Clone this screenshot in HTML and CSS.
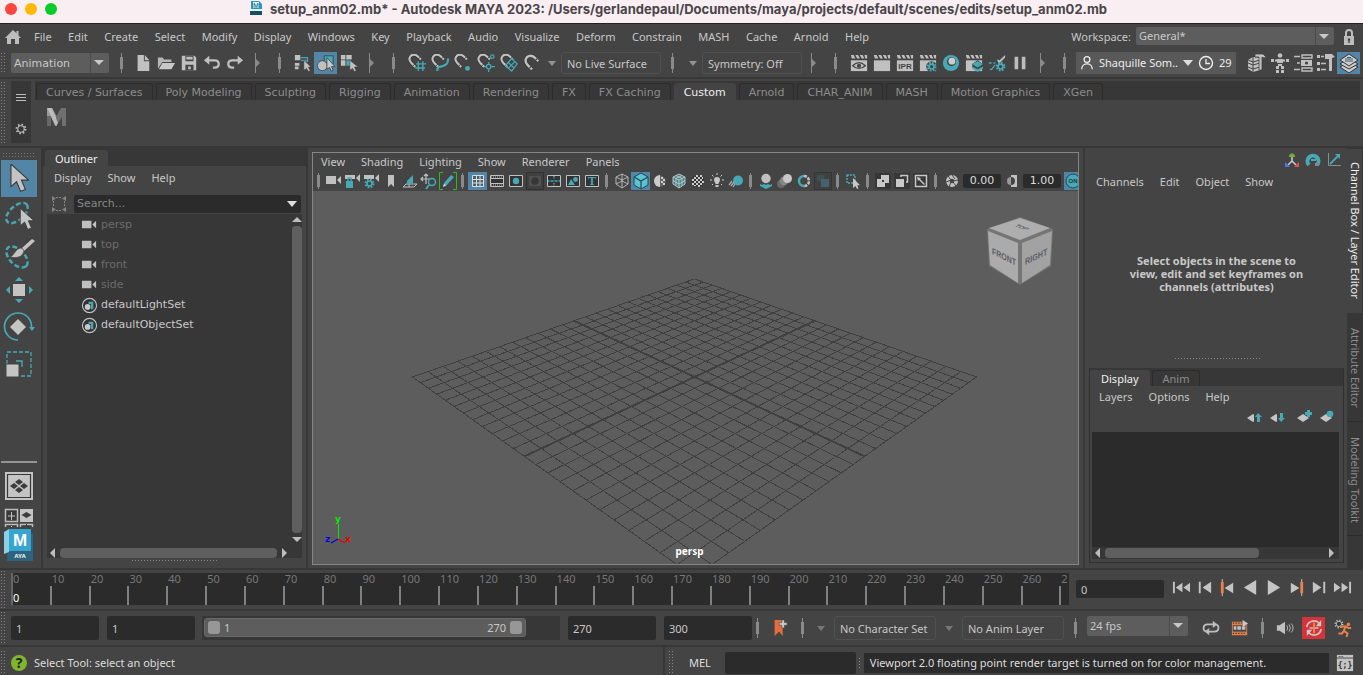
FILE: index.html
```html
<!DOCTYPE html>
<html lang="en">
<head>
<meta charset="utf-8">
<title>setup_anm02.mb* - Autodesk MAYA 2023</title>
<link rel="stylesheet" href="styles.css">
</head>
<body>
<svg class="defs" aria-hidden="true">
<defs>
<symbol id="arrow-cursor" viewBox="0 0 12 18"><path d="M1 0v14l3.500-3 2.500 6 3-1.200-2.500-5.800h4.500z" fill="#c4c4c4" stroke="#3a3a3a" stroke-width=".7"/></symbol>
<symbol id="home" viewBox="0 0 18 18"><path d="M9 2 1 10h2v6h4v-5h4v5h4v-6h2l-2.500-2.500V3h-2v2.300z" fill="#bdbdbd"/></symbol>
<symbol id="lock" viewBox="0 0 14 18"><path d="M4 8V5a3 3 0 0 1 6 0v3" fill="none" stroke="#bdbdbd" stroke-width="2"/><path d="M2 8h10v9H2z" fill="#bdbdbd"/><path d="M6.300 11h1.400v4H6.300zM5.800 10.500h2.400v2H5.800z" fill="#444"/></symbol>
<symbol id="new" viewBox="0 0 20 20"><path d="M4 1h7v7h6v11H4z" fill="#c0c0c0"/><path d="m12 1 5 6h-5z" fill="#c0c0c0"/></symbol>
<symbol id="open" viewBox="0 0 20 20"><path d="M1 16V4h5l2 2h8v3H6z" fill="#b6b6b6"/><path d="M2 17 6 10h14l-4 7z" fill="#c8c8c8"/></symbol>
<symbol id="save" viewBox="0 0 20 20"><path d="M2 2h14l2 2v14H2z" fill="#c0c0c0"/><path d="M6 2h9v6H6zM6 12h9v6H6z" fill="#444"/><path d="M7 3h7v3H7zM9 14h3v3H9z" fill="#c0c0c0"/></symbol>
<symbol id="undo" viewBox="0 0 20 20"><path d="M4 7h9c6 0 6 8 0 8h-2" fill="none" stroke="#c0c0c0" stroke-width="2.500"/><path d="M7 2 1 7l6 5z" fill="#c0c0c0"/></symbol>
<symbol id="redo" viewBox="0 0 20 20"><path d="M16 7H7c-6 0-6 8 0 8h2" fill="none" stroke="#c0c0c0" stroke-width="2.500"/><path d="m13 2 6 5-6 5z" fill="#c0c0c0"/></symbol>
<symbol id="sel-hier" viewBox="0 0 20 20"><path d="M1 1h6v6H1zM1 10h5v3H1zM1 14h4v3H1z" fill="#c0c0c0"/><path d="M7 4h8v5M8 7h5v4" fill="none" stroke="#47a6b2" stroke-width="1.500"/><path d="M11 7v11l3-2 2 3.500 2-1-2-4h3z" fill="#c0c0c0" stroke="#333" stroke-width=".5"/></symbol>
<symbol id="sel-obj" viewBox="0 0 20 20"><path d="M8 2h10v10H8z" fill="#47a9b5" stroke="#333" stroke-width=".8"/><circle cx="6" cy="13" r="5.500" fill="#c0c0c0" stroke="#333" stroke-width=".8"/><path d="M11 4v13l3-2 2 4 2-1-2-4h4z" fill="#c8c8c8" stroke="#333" stroke-width=".8"/></symbol>
<symbol id="sel-comp" viewBox="0 0 20 20"><path d="M1 1h5v5H1zM7 1h6v5H7zM1 7h5v6H1z" fill="#c0c0c0"/><path d="M7 7h5v6H7z" fill="#47a9b5"/><path d="M11 7v11l3-2 2 3.500 2-1-2-4h4z" fill="#c0c0c0" stroke="#333" stroke-width=".5"/></symbol>
<symbol id="magnet" viewBox="0 0 20 20"><path d="M10 17 5 12C-1 6 7-2 13 4l4 4" fill="none" stroke="#333" stroke-width="4"/><path d="M10 17 5 12C-1 6 7-2 13 4l4 4" fill="none" stroke="#c0c0c0" stroke-width="2.700"/><path d="m7 16 3-3M13 8l3-3" stroke="#444" stroke-width="1.200"/></symbol>
<symbol id="snap-grid" viewBox="0 0 20 20"><use href="#magnet" x="-1" y="-1" width="18" height="18"/><path d="M9 11h11M8 15.500h11M11.500 8v11M16.500 8v11" stroke="#47a9b5" stroke-width="1.500"/></symbol>
<symbol id="snap-curve" viewBox="0 0 20 20"><use href="#magnet" x="-1" y="-1" width="18" height="18"/><path d="M7 19c0-6 3-4 7-6 4-1 5-3 5-8" fill="none" stroke="#47a9b5" stroke-width="2.500"/></symbol>
<symbol id="snap-point" viewBox="0 0 20 20"><use href="#magnet" x="-1" y="-1" width="18" height="18"/><circle cx="15" cy="16" r="2.700" fill="#47a9b5"/></symbol>
<symbol id="snap-center" viewBox="0 0 20 20"><use href="#magnet" x="-1" y="-1" width="18" height="18"/><g fill="none" stroke="#47a9b5" stroke-width="1.400"><circle cx="13" cy="14" r="2.500"/><circle cx="17" cy="3" r="1.900"/><path d="M13 9v2M13 17v3M8 14h2M16 14h4"/></g></symbol>
<symbol id="snap-plane" viewBox="0 0 20 20"><use href="#magnet" x="-1" y="-1" width="18" height="18"/><path d="m13 5 6 6-6 8-7-6zM9 9l7 7M16 9l-7 7" fill="none" stroke="#47a9b5" stroke-width="1.400"/></symbol>
<symbol id="clap" viewBox="0 0 20 20"><path d="M1 7h18v12H1z" fill="#c0c0c0"/><path d="M1 1h3l2 4H2zM6 1h3l2 4H8zM11 1h3l2 4h-3zM16 1h3v4h-2z" fill="#c0c0c0"/></symbol>
<symbol id="clap-eye" viewBox="0 0 20 20"><use href="#clap" width="20" height="20"/><path d="M3 13q7-7 14 0-7 6-14 0z" fill="#c0c0c0" stroke="#444" stroke-width="1.400"/><circle cx="10" cy="13" r="2.300" fill="#444"/></symbol>
<symbol id="clap-ipr" viewBox="0 0 20 20"><use href="#clap" width="20" height="20"/><text x="10" y="17" text-anchor="middle" font-family="Liberation Sans" font-weight="bold" font-size="9" fill="#444">IPR</text></symbol>
<symbol id="gear" viewBox="0 0 20 20"><circle cx="10" cy="10" r="7" fill="none" stroke="#47a9b5" stroke-width="4" stroke-dasharray="3 2.500"/><circle cx="10" cy="10" r="4.500" fill="#444" stroke="#47a9b5" stroke-width="3"/></symbol>
<symbol id="gear-grey" viewBox="0 0 16 16"><circle cx="8" cy="8" r="6" fill="none" stroke="#bdbdbd" stroke-width="2.500" stroke-dasharray="2 2.700"/><circle cx="8" cy="8" r="4.300" fill="#373737" stroke="#bdbdbd" stroke-width="1.500"/></symbol>
<symbol id="clap-gear" viewBox="0 0 20 20"><use href="#clap" width="20" height="20"/><circle cx="14" cy="14" r="6" fill="#444"/><use href="#gear" x="8" y="8" width="12" height="12"/></symbol>
<symbol id="render-ball" viewBox="0 0 20 20"><circle cx="10" cy="10" r="9" fill="#47a9b5"/><circle cx="10.500" cy="8.500" r="5" fill="#444"/><circle cx="11" cy="8" r="3.800" fill="#ccc"/></symbol>
<symbol id="clap-layers" viewBox="0 0 20 20"><use href="#clap" width="20" height="20"/><path d="m14 7 6 4v4l-6 5-6-5v-4z" fill="#444"/><path d="m14 8 6 3-6 4-6-4z" fill="#47a9b5"/><path d="m8 14 6 3 6-3v2l-6 4-6-4z" fill="#47a9b5"/></symbol>
<symbol id="hyper" viewBox="0 0 20 20"><path d="m19 1-6 6-3-1 2 5 7-7z" fill="#c0c0c0"/><path d="M1 10h3M6 10h2M2 17h2l4-5" stroke="#47a9b5" stroke-width="1.500" fill="none"/><use href="#gear" x="8" y="8" width="12" height="12"/></symbol>
<symbol id="pause" viewBox="0 0 20 20"><path d="M4 3h4v14H4zM12 3h4v14h-4z" fill="#bdbdbd"/></symbol>
<symbol id="model" viewBox="0 0 20 20"><path d="m1 7 5-3 7 1v12l-7 2-5-3z" fill="#c0c0c0"/><path d="M6 4v15M1 10l5 2 7-2M1 14l5 2 7-2M1 7l5 2 7-2" stroke="#444" fill="none"/><path d="M8 1h8l3 3-2 1-2-1v13h-3V4H8z" fill="#c0c0c0" stroke="#444" stroke-width=".8"/></symbol>
<symbol id="human" viewBox="0 0 20 20"><circle cx="10" cy="2.500" r="2.300" fill="#c0c0c0"/><path d="M1 6h3v3H1zM16 6h3v3h-3zM5 6.500h2v2H5zM13 6.500h2v2h-2zM7 6h6v4H7zM8 11h4v2H8zM6 13h3v3H6zM11 13h3v3h-3zM6 17h3v3H6zM11 17h3v3h-3z" fill="#c0c0c0"/></symbol>
<symbol id="attrs" viewBox="0 0 20 20"><path d="M9 2h10v3H9zM9 15h10v3H9z" fill="#444" stroke="#c0c0c0" stroke-width="1.400"/><path d="M1 3.500h6M1 16.500h6M4 10h3" stroke="#c0c0c0" stroke-width="1.400"/><path d="M8 7h11v6H8z" fill="#c0c0c0"/><circle cx="13.500" cy="10" r="1.600" fill="#444"/></symbol>
<symbol id="toolset" viewBox="0 0 20 20"><path d="M1 2h3v3H1zM1 9h3v3H1zM1 15h3v3H1z" fill="#c0c0c0"/><path d="M5 3.500h3M5 10.500h5M5 16.500h5" stroke="#c0c0c0" stroke-width="1.500"/><path d="M9 1h7l3 3-3 1v13h-3V6H9z" fill="#c0c0c0"/></symbol>
<symbol id="layers" viewBox="0 0 20 20"><path d="m10 9 9 5-9 6-9-6z" fill="#ccc" stroke="#333"/><path d="m10 5 9 6-9 5-9-5z" fill="#ccc" stroke="#333"/><path d="m10 1 9 6-9 6-9-6z" fill="#ccc" stroke="#333"/><path d="M6 6h8M6 8h8M8 4.500h4" stroke="#3d5f75"/></symbol>
<symbol id="user" viewBox="0 0 16 18"><circle cx="8" cy="5" r="3.300" fill="none" stroke="#eee" stroke-width="1.500"/><path d="M2 16c0-8 12-8 12 0" fill="none" stroke="#eee" stroke-width="1.500"/></symbol>
<symbol id="clock" viewBox="0 0 16 16"><circle cx="8" cy="8" r="6.500" fill="none" stroke="#eee" stroke-width="1.400"/><path d="M8 4v4.500h4" fill="none" stroke="#eee" stroke-width="1.300"/></symbol>
<symbol id="lasso" viewBox="0 0 32 34"><ellipse cx="14" cy="14" rx="13" ry="7" transform="rotate(-42 14 14)" fill="none" stroke="#47a6b2" stroke-width="2.500" stroke-dasharray="5 2.500"/><use href="#arrow-cursor" x="16" y="9" width="15" height="23"/></symbol>
<symbol id="paintsel" viewBox="0 0 32 34"><ellipse cx="14" cy="21" rx="13" ry="7.500" transform="rotate(45 14 21)" fill="none" stroke="#47a6b2" stroke-width="2.500" stroke-dasharray="5 2.500"/><path d="m29 3-10 9 2 3 11-10z" fill="#c4c4c4"/><path d="M21 14c-1 8-8 8-14 7 5-2 5-8 11-9z" fill="#c4c4c4" stroke="#444" stroke-width=".6"/></symbol>
<symbol id="move" viewBox="0 0 32 32"><path d="M10 10h12v12H10z" fill="#c4c4c4"/><path d="m16 3 4 4h-8zM16 29l4-4h-8zM3 16l4-4v8zM30 16l-4-4v8z" fill="#47a9b5"/></symbol>
<symbol id="rotate" viewBox="0 0 32 32"><path d="m15 8 8 8-8 8-8-8z" fill="#c4c4c4"/><path d="M15 29A13.500 13.500 0 1 1 28.500 16" fill="none" stroke="#47a9b5" stroke-width="1.700"/><path d="M26 16h6l-3 4z" fill="#47a9b5"/></symbol>
<symbol id="scale" viewBox="0 0 32 32"><path d="M4 4h24v24H4z" fill="none" stroke="#47a9b5" stroke-width="1.300" stroke-dasharray="4 2"/><path d="M3 16h13v13H3z" fill="#c4c4c4" stroke="#444"/><path d="M13 13h6v6" fill="none" stroke="#47a9b5" stroke-width="1.300"/></symbol>
<symbol id="fourview" viewBox="0 0 30 30"><path d="M1 1h28v28H1z" fill="#c4c4c4"/><path d="M3.500 3.500h23v23h-23z" fill="none" stroke="#383838" stroke-width="1.200"/><path d="m15 8 4 3-4 3-4-3zM15 16l4 3-4 3-4-3zM10 12l4 3-4 3-4-3zM20 12l4 3-4 3-4-3z" fill="#3c3c3c"/></symbol>
<symbol id="fourpane" viewBox="0 0 30 19"><path d="M1.500 1.500h12v12h-12zM1.500 16.500h12v6h-12zM16.500 16.500h12v6h-12z" fill="#3a3a3a" stroke="#bdbdbd" stroke-width="1.500"/><path d="M16 1h13v13H16z" fill="#c4c4c4"/><path d="m22.500 4 5 3-5 3-5-3zM22 16h1v3h-1z" fill="#3c3c3c"/><path d="M7.500 4v8M4 8h7M7.500 18v1" stroke="#c4c4c4"/></symbol>
<symbol id="cam" viewBox="0 0 18 18"><path d="M1 4h10v8H1zM12 8l4-4v8z" fill="#c0c0c0"/></symbol>
<symbol id="camlock" viewBox="0 0 18 18"><path d="M1 3h10v4H1zM12 6l4-4v8z" fill="#c0c0c0"/><path d="M2 9h7v7H2z" fill="#47a9b5"/><path d="M4 9V6h3v3" fill="none" stroke="#47a9b5" stroke-width="1.300"/></symbol>
<symbol id="camgear" viewBox="0 0 18 18"><path d="M1 3h10v4H1zM12 6l4-4v8z" fill="#c0c0c0"/><use href="#gear" x="1" y="6" width="11" height="11"/></symbol>
<symbol id="mark" viewBox="0 0 18 18"><path d="M6 3h6v12l-3-3-3 3z" fill="#c0c0c0"/></symbol>
<symbol id="plane" viewBox="0 0 18 18"><path d="m2 15 3-3h11l-3 3zM8 12v3" fill="none" stroke="#c0c0c0"/><path d="M6 13V9l6-6v8z" fill="#47a9b5"/></symbol>
<symbol id="panzoom" viewBox="0 0 18 18"><path d="M1 7h9M6 2v10M4 4l2-2 2 2M3 5 1 7l2 2" fill="none" stroke="#c0c0c0" stroke-width="1.200"/><circle cx="12" cy="10" r="3.500" fill="#444" stroke="#47a9b5" stroke-width="1.500"/><path d="m9 13-3 4" stroke="#47a9b5" stroke-width="1.800"/></symbol>
<symbol id="pencil" viewBox="0 0 18 18"><path d="M4 .500H.500v17H4M14 .500h3.500v17H14" fill="none" stroke="#2dbb22"/><path d="m4 15 1-4 7-8 3 2-8 9z" fill="#47a9b5"/><path d="m4 15 1-3 2 1z" fill="#ddd"/></symbol>
<symbol id="gridv" viewBox="0 0 18 18"><path d="M3.500 3.500h11v11h-11zM7.500 4v10M11 4v10M4 7.500h10M4 11h10" fill="#4a6170" stroke="#ddd"/></symbol>
<symbol id="film" viewBox="0 0 18 18"><path d="M2.500 3.500h13v11h-13z" fill="#333" stroke="#c0c0c0"/><path d="M3 5h12M3 13h12" stroke="#c0c0c0" stroke-dasharray="1 1"/><path d="M3 6.500h12M3 11.500h12" stroke="#c0c0c0"/></symbol>
<symbol id="gate" viewBox="0 0 18 18"><path d="M2.500 3.500h13v11h-13z" fill="#333" stroke="#c0c0c0"/><circle cx="9" cy="9" r="3.200" fill="#47a9b5"/></symbol>
<symbol id="maskg" viewBox="0 0 18 18"><path d="M.500.500h17v17H.500z" fill="#404040" stroke="#303030"/><path d="M3 4h12v10H3z" fill="#505050"/><circle cx="9" cy="9" r="3.700" fill="#363636"/></symbol>
<symbol id="chart" viewBox="0 0 18 18"><path d="M2.500 3.500h13v11h-13z" fill="#333" stroke="#c0c0c0"/><path d="M3 9h4M11 9h4M9 4v3M9 11v3M7 9h4" stroke="#47a9b5" stroke-width="1.500" stroke-dasharray="1.500 1"/></symbol>
<symbol id="safe" viewBox="0 0 18 18"><path d="M2.500 3.500h13v11h-13z" fill="#333" stroke="#c0c0c0"/><path d="m4 13 3-6 4 6z" fill="#47a9b5"/><circle cx="11.500" cy="7.500" r="2.400" fill="#47a9b5"/></symbol>
<symbol id="ttl" viewBox="0 0 18 18"><path d="M2.500 3.500h13v11h-13z" fill="#333" stroke="#c0c0c0"/><text x="9" y="13" text-anchor="middle" font-family="Liberation Serif" font-weight="bold" font-size="12" fill="#47a9b5">T</text></symbol>
<symbol id="wire" viewBox="0 0 18 18"><path d="m9 2 6 3v7l-6 4-6-4V5zM3 5l6 3 6-3M9 8v8M9 2v7M3 12l6-3 6 3" fill="none" stroke="#b4b4b4"/></symbol>
<symbol id="shaded" viewBox="0 0 18 18"><path d="m9 1 7 4v8l-7 4-7-4V5z" fill="#5ac4d0" stroke="#274654"/><path d="m2 5 7 4 7-4M9 9v8" fill="none" stroke="#274654" stroke-width="1.200"/></symbol>
<symbol id="half" viewBox="0 0 18 18"><circle cx="9" cy="9" r="5.700" fill="#666"/><path d="M9 3a6 6 0 0 0 0 12z" fill="#ccc"/><path d="M10 5h2v2h-2zM12 7h2v2h-2zM10 9h2v2h-2zM12 11h2v2h-2z" fill="#ccc"/></symbol>
<symbol id="wireshade" viewBox="0 0 18 18"><path d="m9 2 6 3v7l-6 4-6-4V5z" fill="#3b8691" stroke="#c0c0c0"/><path d="m3 5 6 3 6-3M9 8v8M6 3.500l6 3v7M12 3.500l-6 3v7M3 8.500l6 3.500 6-3.500" fill="none" stroke="#c0c0c0"/></symbol>
<symbol id="checker" viewBox="0 0 18 18"><circle cx="9" cy="9" r="6" fill="#333"/><path d="M7 3h2v2H7zM11 3h2v2h-2zM5 5h2v2H5zM9 5h2v2H9zM13 5h1v2h-1zM3 7h2v2H3zM7 7h2v2H7zM11 7h2v2h-2zM5 9h2v2H5zM9 9h2v2H9zM13 9h2v2h-2zM3 11h2v2H3zM7 11h2v2H7zM11 11h2v2h-2zM5 13h2v1H5zM9 13h2v2H9z" fill="#ccc"/></symbol>
<symbol id="bulb" viewBox="0 0 18 18"><path d="M6 8a3 3 0 1 1 6 0c0 2-1.500 2-1.500 4h-3C7.500 10 6 10 6 8zM7.500 13h3v2h-3z" fill="#c8c8c8"/><path d="M9 1v2M4 3l1.500 1.500M14 3l-1.500 1.500M2 8h2M14 8h2M4 13l1-1M14 13l-1-1" stroke="#c8c8c8"/></symbol>
<symbol id="shadow" viewBox="0 0 18 18"><circle cx="11" cy="8.500" r="5" fill="#47a9b5"/><path d="m2 13 3-4M4 14l3-4M6 15l2-3" stroke="#aaa" stroke-width="1.300"/></symbol>
<symbol id="ao" viewBox="0 0 18 18"><circle cx="9" cy="6.500" r="4.700" fill="#c0c0c0"/><path d="m3 12 2 1 2-1 2 1 2-1 2 1 2-1v2l-6 3-6-3z" fill="#47a9b5"/></symbol>
<symbol id="blur" viewBox="0 0 18 18"><circle cx="5" cy="12" r="4" fill="#696969"/><circle cx="8" cy="9" r="4.400" fill="#888"/><circle cx="11.500" cy="6.500" r="4.500" fill="#c8c8c8"/></symbol>
<symbol id="aa" viewBox="0 0 18 18"><path d="M9 4a5 5 0 0 0 0 10" fill="none" stroke="#47a9b5" stroke-width="2.500"/><path d="M9 4a5 5 0 0 1 0 10" fill="none" stroke="#c0c0c0" stroke-width="2.500" stroke-dasharray="3 1"/></symbol>
<symbol id="dof" viewBox="0 0 18 18"><path d="M.500.500h17v17H.500z" fill="#404040" stroke="#353535"/><path d="M3 3h7v6H3z" fill="#3f5050"/><path d="M7 7h8v8H7z" fill="#45636e"/></symbol>
<symbol id="isolate" viewBox="0 0 18 18"><path d="M3 3h8v8H3z" fill="none" stroke="#47a9b5" stroke-width="1.400" stroke-dasharray="2 1"/><path d="M9 6v10l2.500-2 1.500 3 1.500-.7-1.300-3H16z" fill="#c8c8c8"/></symbol>
<symbol id="xray" viewBox="0 0 18 18"><path d="M1 1h16v16H1z" fill="#373737"/><path d="M3 7h8v8H3z" fill="#c8c8c8"/><path d="M7 3h8v8H7z" fill="#c8c8c8"/><path d="M8 8h2v2H8z" fill="#373737"/></symbol>
<symbol id="xrayj" viewBox="0 0 18 18"><path d="M1 1h16v16H1z" fill="#373737"/><path d="M3 7h8v8H3z" fill="#c8c8c8"/><path d="M8 5V3.500h6.500V10H13" fill="none" stroke="#c8c8c8" stroke-width="1.500"/></symbol>
<symbol id="expose" viewBox="0 0 18 18"><path d="M1 1h16v16H1z" fill="#373737"/><path d="M3.500 3.500h11v11h-11z" fill="none" stroke="#c8c8c8" stroke-width="1.500"/><path d="m5 5 4 1-1 1 5 5-1 1-5-5-1 1z" fill="#c8c8c8"/></symbol>
<symbol id="iris" viewBox="0 0 18 18"><circle cx="9" cy="9" r="6" fill="#c0c0c0"/><circle cx="9" cy="9" r="2.300" fill="#444"/><path d="m9 3 3 4M15 8l-5 1M13 14l-3-4M6 15l2-5M3 10l5-2M5 4l3 4" stroke="#444"/></symbol>
<symbol id="gamma" viewBox="0 0 18 18"><path d="M8 3h6v12H8v-2a4 4 0 0 0 0-8z" fill="#c0c0c0"/><path d="M8 5a4 4 0 0 0 0 8z" fill="#999"/></symbol>
<symbol id="setico" viewBox="0 0 18 18"><circle cx="9" cy="9" r="7.500" fill="#333" stroke="#c0c0c0" stroke-width="1.200"/><circle cx="7" cy="10.500" r="3" fill="#c8c8c8"/><path d="M8 5h5v8h-2.500V7.500H8z" fill="#47a9b5"/></symbol>
<symbol id="frame" viewBox="0 0 16 16"><path d="M1 0v5l4-2.500zM15 0v5l-4-2.500zM1 11v5l4-2.500zM15 11v5l-4-2.500z" fill="#858585"/><path d="M2.500 5v6M13.500 5v6M5 1.500h6M5 14.500h6" stroke="#858585" stroke-dasharray="2 1"/></symbol>
<symbol id="triad" viewBox="0 0 16 16"><path d="M8 5v5M8 9l-4 4M8 9l4 4" stroke="#ccc" stroke-width="1.500"/><path d="M8 1 5 3v2h6V3z" fill="#6dab3b"/><path d="M1 10v5h5z" fill="#4779ea"/><path d="M15 10v5h-5z" fill="#e0524e"/></symbol>
<symbol id="speed" viewBox="0 0 16 16"><path d="M4 13a5.500 5.500 0 1 1 8 0" fill="none" stroke="#47a9b5" stroke-width="4"/><path d="M6 8h5" stroke="#47a9b5" stroke-width="2"/><path d="M10 11h5l-2 3h-3z" fill="#888"/></symbol>
<symbol id="graph" viewBox="0 0 16 16"><path d="M2.500 1v12.500H15" fill="none" stroke="#8c8c8c"/><path d="m4 12 8-8" stroke="#47a9b5" stroke-width="1.800"/><path d="M14 2v5L9 2z" fill="#47a9b5"/></symbol>
<symbol id="lay" viewBox="0 0 16 16"><path d="m1 9 6-4 6 4-6 4z" fill="#c4c4c4"/></symbol>
<symbol id="layup" viewBox="0 0 16 16"><use href="#lay" width="16" height="16"/><path d="M8 4h8v9H8z" fill="#444"/><path d="m12 4 4 4h-2v5h-3V8H9z" fill="#47a9b5"/></symbol>
<symbol id="laydown" viewBox="0 0 16 16"><use href="#lay" width="16" height="16"/><path d="M8 4h8v9H8z" fill="#444"/><path d="M11 4h3v5h2l-4 4-3-4h2z" fill="#47a9b5"/></symbol>
<symbol id="layplus" viewBox="0 0 16 16"><use href="#lay" width="16" height="16"/><path d="M11 1h3v2h2v3h-2v2h-3V6H9V3h2z" fill="#47a9b5"/></symbol>
<symbol id="laydot" viewBox="0 0 16 16"><use href="#lay" width="16" height="16"/><circle cx="11" cy="5" r="3.300" fill="#47a9b5"/></symbol>
<symbol id="tostart" viewBox="0 0 20 20"><path d="M1 4h2v12H1zM11 5v10l-7-5zM19 5v10l-7-5z" fill="#c4c4c4"/></symbol>
<symbol id="stepback" viewBox="0 0 20 20"><path d="M4 4h2v12H4zM17 4v12l-9-6z" fill="#c4c4c4"/></symbol>
<symbol id="keyback" viewBox="0 0 20 20"><path d="M4 1h1v18H4z" fill="#c4c4c4"/><path d="M3 4h3v12H3z" fill="#e6834a"/><path d="M16 5v11l-9-5.500z" fill="#c4c4c4"/></symbol>
<symbol id="playback" viewBox="0 0 20 20"><path d="M16 2v16L3 10z" fill="#c4c4c4"/></symbol>
<symbol id="loop" viewBox="0 0 20 20"><path d="M5 14c-5-1-4-8 1-8h8M15 6c5 1 4 8-1 8H6" fill="none" stroke="#bdbdbd" stroke-width="2"/><path d="m12 2 5 4-5 4zM8 10l-5 4 5 4z" fill="#bdbdbd"/></symbol>
<symbol id="cache" viewBox="0 0 20 20"><path d="M1 3h12v3h5v12H1z" fill="#e27f45"/><path d="M2 7h15v7H2z" fill="#444"/><path d="M3 8h3v4H3zM7 8h4v4H7zM12 8h4v4h-4z" fill="#c0c0c0"/><path d="M2 4.500h10M2 16h15" stroke="#444" stroke-width="1.500" stroke-dasharray="1.500 1.500"/><path d="m13 1 6 4-6 4z" fill="#c8c8c8"/></symbol>
<symbol id="speaker" viewBox="0 0 20 20"><path d="M1 7h3l6-4v14l-6-4H1z" fill="#c0c0c0"/><path d="M12 7q2 3 0 6M14.500 6q3 4 0 8M17 5q4 5 0 10" fill="none" stroke="#bdbdbd"/></symbol>
<symbol id="autokey" viewBox="0 0 20 20"><path d="M2 9a8 8 0 0 1 14-4M18 11a8 8 0 0 1-14 4" fill="none" stroke="#c8c8c8" stroke-width="2"/><path d="M18 1v7h-6zM2 19v-7h6z" fill="#c8c8c8"/><path d="M5 10h10" stroke="#ccc" stroke-width="1.500"/><path d="M9 4h2v12H9z" fill="#eb8c45"/></symbol>
<symbol id="runner" viewBox="0 0 20 20"><use href="#gear-grey" width="11" height="11"/><circle cx="16" cy="6" r="2" fill="#e6834a"/><path d="m7 9 6-1 3 2h3M13 8l-2 5 4 3-1 4M11 13l-2 3H5" fill="none" stroke="#e6834a" stroke-width="2.200"/></symbol>
<symbol id="bookadd" viewBox="0 0 20 20"><path d="M4 1h9v18l-4-5-5 5z" fill="#e56d3c"/><path d="M12 1h3v3h3v3h-3v3h-3V7H9V4h3z" fill="#c8c8c8" stroke="#444" stroke-width=".7"/></symbol>
<symbol id="script" viewBox="0 0 20 20"><path d="M1 1h18v18H1z" fill="#c4c4c4"/><path d="M1 4.500h18" stroke="#444"/><path d="M3 3h2M6 3h2" stroke="#444"/><text x="10" y="15" text-anchor="middle" font-family="DejaVu Sans Mono" font-weight="bold" font-size="9" fill="#333">{;}</text></symbol>
</defs>
</svg>

<header class="titlebar">
  <div class="lights"><button class="light red" aria-label="Close"></button><button class="light yellow" aria-label="Minimise"></button><button class="light green" aria-label="Zoom"></button></div>
  <svg class="docicon" viewBox="0 0 12 15" aria-hidden="true"><path d="M1 0h8l3 3v12H1z" fill="#e9f3f6"/><path d="M1 0h8l3 3v5H1z" fill="#2f94b5"/><path d="M3 1h6v6H3z" fill="#fff"/><text x="6" y="7" text-anchor="middle" font-family="Liberation Sans" font-weight="bold" font-size="7" fill="#1888ae">M</text><path d="M0 10h12v4H0z" fill="#174e65"/></svg>
  <h1>setup_anm02.mb* - Autodesk MAYA 2023: /Users/gerlandepaul/Documents/maya/projects/default/scenes/edits/setup_anm02.mb</h1>
</header>

<nav class="menubar" aria-label="Main menu">
  <button class="home" aria-label="Home"><svg><use href="#home"/></svg></button>
  <div class="menus"><button>File</button><button>Edit</button><button>Create</button><button>Select</button><button>Modify</button><button>Display</button><button>Windows</button><button>Key</button><button>Playback</button><button>Audio</button><button>Visualize</button><button>Deform</button><button>Constrain</button><button>MASH</button><button>Cache</button><button>Arnold</button><button>Help</button></div>
  <label class="wslabel" for="workspace">Workspace:</label>
  <span class="combo ws"><select id="workspace"><option>General*</option></select></span>
  <button class="lock" aria-label="Lock workspace"><svg><use href="#lock"/></svg></button>
</nav>

<div class="status">
  <span class="grip"></span>
  <span class="combo mode"><select aria-label="Menu set"><option>Animation</option></select></span>
  <i class="sep"></i>
  <button class="ib" aria-label="New scene"><svg><use href="#new"/></svg></button><button class="ib" aria-label="Open scene"><svg><use href="#open"/></svg></button><button class="ib" aria-label="Save scene"><svg><use href="#save"/></svg></button><button class="ib" aria-label="Undo"><svg><use href="#undo"/></svg></button><button class="ib" aria-label="Redo"><svg><use href="#redo"/></svg></button>
  <i class="more"></i><i class="sep"></i>
  <button class="ib" aria-label="Select by hierarchy"><svg><use href="#sel-hier"/></svg></button><button class="ib on" aria-label="Select by object"><svg><use href="#sel-obj"/></svg></button><button class="ib" aria-label="Select by component"><svg><use href="#sel-comp"/></svg></button>
  <i class="more"></i><i class="sep"></i>
  <button class="ib" aria-label="Snap to grids"><svg><use href="#snap-grid"/></svg></button><button class="ib" aria-label="Snap to curves"><svg><use href="#snap-curve"/></svg></button><button class="ib" aria-label="Snap to points"><svg><use href="#snap-point"/></svg></button><button class="ib" aria-label="Snap to centre"><svg><use href="#snap-center"/></svg></button><button class="ib" aria-label="Snap to planes"><svg><use href="#snap-plane"/></svg></button><button class="ib" aria-label="Make live"><svg><use href="#magnet"/></svg></button>
  <button class="drop" aria-label="Live surface options"></button>
  <button class="field-btn">No Live Surface</button>
  <i class="sep"></i>
  <button class="drop" aria-label="Symmetry options"></button>
  <button class="field-btn">Symmetry: Off</button>
  <i class="more"></i><i class="sep"></i>
  <button class="ib" aria-label="Render view"><svg><use href="#clap-eye"/></svg></button><button class="ib" aria-label="Render"><svg><use href="#clap"/></svg></button><button class="ib" aria-label="IPR render"><svg><use href="#clap-ipr"/></svg></button><button class="ib" aria-label="Render settings"><svg><use href="#clap-gear"/></svg></button><button class="ib" aria-label="Hypershade"><svg><use href="#render-ball"/></svg></button><button class="ib" aria-label="Render setup"><svg><use href="#clap-layers"/></svg></button><button class="ib" aria-label="Light editor"><svg><use href="#hyper"/></svg></button><button class="ib" aria-label="Pause viewport"><svg><use href="#pause"/></svg></button>
  <i class="more"></i><i class="sep"></i>
  <button class="account"><svg class="uicon"><use href="#user"/></svg><span>Shaquille Som..</span><i class="tri"></i><svg class="clock"><use href="#clock"/></svg><span>29</span></button>
  <div class="panels"><button class="ib" aria-label="Modeling toolkit"><svg><use href="#model"/></svg></button><button class="ib" aria-label="Character controls"><svg><use href="#human"/></svg></button><button class="ib" aria-label="Attribute editor"><svg><use href="#attrs"/></svg></button><button class="ib" aria-label="Tool settings"><svg><use href="#toolset"/></svg></button><button class="ib on" aria-label="Channel box"><svg><use href="#layers"/></svg></button></div>
</div>

<section class="shelf">
  <span class="grip"></span>
  <div class="shelfside"><button aria-label="Shelf menu" class="burger"></button><button aria-label="Shelf options" class="cog"><svg><use href="#gear-grey"/></svg></button></div>
  <div class="shelfmain">
    <div class="shelftabs" role="tablist"><button role="tab">Curves / Surfaces</button><button role="tab">Poly Modeling</button><button role="tab">Sculpting</button><button role="tab">Rigging</button><button role="tab">Animation</button><button role="tab">Rendering</button><button role="tab">FX</button><button role="tab">FX Caching</button><button role="tab" aria-selected="true">Custom</button><button role="tab">Arnold</button><button role="tab">CHAR_ANIM</button><button role="tab">MASH</button><button role="tab">Motion Graphics</button><button role="tab">XGen</button></div>
    <button class="shelfitem" aria-label="Custom script"><svg viewBox="0 0 19 18"><path d="M0 0h5l5 9v9H8L4 9v9H0z" fill="#999"/><path d="M19 0h-5l-5 9v9l6-9v9h4z" fill="#707070"/><path d="M0 0h5l6 15-2 3z" fill="#bcbcbc"/><path d="M0 8h4v10H0z" fill="#686868"/></svg></button>
  </div>
</section>

<main class="work">
  <aside class="toolbox">
    <span class="hgrip"></span>
    <button class="tool on" aria-label="Select tool"><svg class="cursor"><use href="#arrow-cursor"/></svg></button>
    <button class="tool" aria-label="Lasso tool"><svg><use href="#lasso"/></svg></button>
    <button class="tool" aria-label="Paint selection tool"><svg><use href="#paintsel"/></svg></button>
    <button class="tool" aria-label="Move tool"><svg><use href="#move"/></svg></button>
    <button class="tool" aria-label="Rotate tool"><svg><use href="#rotate"/></svg></button>
    <button class="tool" aria-label="Scale tool"><svg><use href="#scale"/></svg></button>
    <div class="layouts">
      <button aria-label="Single view"><svg class="four"><use href="#fourview"/></svg></button>
      <button aria-label="Four view"><svg class="pane"><use href="#fourpane"/></svg></button>
      <svg class="logo" viewBox="0 0 30 32" role="img" aria-label="Maya"><path d="M4 5h25v27H3z" fill="#2d637d"/><path d="M0 3 5 0v23l-5 2z" fill="#8bd0e4"/><path d="M5 0h22v22H5z" fill="#36a5d1"/><text x="16" y="17" text-anchor="middle" font-family="Liberation Sans" font-weight="bold" font-size="17" fill="#fff">M</text><text x="16" y="29" text-anchor="middle" font-family="Liberation Sans" font-weight="bold" font-size="6" fill="#fff">AYA</text></svg>
    </div>
  </aside>

  <section class="outliner">
    <div class="otabs" role="tablist"><button role="tab" aria-selected="true">Outliner</button></div>
    <div class="menus"><button>Display</button><button>Show</button><button>Help</button></div>
    <div class="searchrow"><svg><use href="#frame"/></svg><span class="searchbox"><input type="search" aria-label="Search outliner" placeholder="Search..."><i class="tri"></i></span></div>
    <div class="tree">
      <ul>
        <li class="dim"><svg><use href="#cam"/></svg>persp</li><li class="dim"><svg><use href="#cam"/></svg>top</li><li class="dim"><svg><use href="#cam"/></svg>front</li><li class="dim"><svg><use href="#cam"/></svg>side</li>
        <li><svg><use href="#setico"/></svg>defaultLightSet</li><li><svg><use href="#setico"/></svg>defaultObjectSet</li>
      </ul>
      <div class="vscroll"><i class="up"></i><b></b><i class="down"></i></div>
      <div class="hscroll"><i class="left"></i><b></b><i class="right"></i></div>
    </div>
    <span class="splitdots"></span>
  </section>

  <section class="viewpanel">
    <div class="menus"><button>View</button><button>Shading</button><button>Lighting</button><button>Show</button><button>Renderer</button><button>Panels</button></div>
    <div class="viewbar">
      <i class="sep"></i><button class="vb" aria-label="Camera"><svg><use href="#cam"/></svg></button><button class="vb" aria-label="Lock camera"><svg><use href="#camlock"/></svg></button><button class="vb" aria-label="Camera attributes"><svg><use href="#camgear"/></svg></button><button class="vb" aria-label="Bookmarks"><svg><use href="#mark"/></svg></button><button class="vb" aria-label="Image plane"><svg><use href="#plane"/></svg></button><button class="vb" aria-label="2D pan zoom"><svg><use href="#panzoom"/></svg></button><button class="vb" aria-label="Blue pencil"><svg><use href="#pencil"/></svg></button>
      <i class="sep"></i><button class="vb on" aria-label="Grid"><svg><use href="#gridv"/></svg></button><button class="vb" aria-label="Film gate"><svg><use href="#film"/></svg></button><button class="vb" aria-label="Resolution gate"><svg><use href="#gate"/></svg></button><button class="vb" aria-label="Gate mask"><svg><use href="#maskg"/></svg></button><button class="vb" aria-label="Field chart"><svg><use href="#chart"/></svg></button><button class="vb" aria-label="Safe action"><svg><use href="#safe"/></svg></button><button class="vb" aria-label="Safe title"><svg><use href="#ttl"/></svg></button>
      <i class="sep"></i><button class="vb" aria-label="Wireframe"><svg><use href="#wire"/></svg></button><button class="vb on" aria-label="Smooth shade"><svg><use href="#shaded"/></svg></button><button class="vb" aria-label="Default material"><svg><use href="#half"/></svg></button><button class="vb" aria-label="Wireframe on shaded"><svg><use href="#wireshade"/></svg></button><button class="vb" aria-label="Textured"><svg><use href="#checker"/></svg></button><button class="vb" aria-label="Use all lights"><svg><use href="#bulb"/></svg></button><button class="vb" aria-label="Shadows"><svg><use href="#shadow"/></svg></button>
      <i class="sep"></i><button class="vb" aria-label="Ambient occlusion"><svg><use href="#ao"/></svg></button><button class="vb" aria-label="Motion blur"><svg><use href="#blur"/></svg></button><button class="vb" aria-label="Anti-aliasing"><svg><use href="#aa"/></svg></button><button class="vb" aria-label="Depth of field"><svg><use href="#dof"/></svg></button>
      <i class="sep"></i><button class="vb" aria-label="Isolate select"><svg><use href="#isolate"/></svg></button>
      <i class="sep"></i><button class="vb" aria-label="X-ray"><svg><use href="#xray"/></svg></button><button class="vb" aria-label="X-ray joints"><svg><use href="#xrayj"/></svg></button><button class="vb" aria-label="X-ray components"><svg><use href="#expose"/></svg></button>
      <i class="sep"></i><button class="vb wide" aria-label="Exposure"><svg><use href="#iris"/></svg></button><input class="num" aria-label="Exposure value" value="0.00"><button class="vb wide" aria-label="Gamma"><svg><use href="#gamma"/></svg></button><input class="num" aria-label="Gamma value" value="1.00"><button class="cm" aria-label="Color management"><svg viewBox="0 0 18 18"><circle cx="9" cy="9" r="7" fill="#47a9b5" stroke="#274654"/><text x="9" y="11" text-anchor="middle" font-family="Liberation Sans" font-weight="bold" font-size="6" fill="#1d3c45">ON</text></svg></button>
    </div>
    <div class="scene">
      <svg class="grid" viewBox="0 0 766 373" preserveAspectRatio="xMidYMid slice" aria-hidden="true"></svg>
      <svg class="cube" viewBox="0 0 70 74" role="img" aria-label="View cube"><path d="m35 2 33 12-2 37-31 19L4 51 2 14z" fill="#757575"/><path d="m35 3 30 10-30 12L4 13z" fill="#aeaeae"/><path d="m3 16 30 12v40L5 50z" fill="#ababab"/><path d="m67 16-30 12v40l28-18z" fill="#a2a2a2"/><text transform="matrix(.78 .38 0 1 7 39)" font-family="Liberation Sans" font-weight="bold" font-size="9" fill="#5b5e66">FRONT</text><text transform="matrix(.8 -.38 0 1 40 50)" font-family="Liberation Sans" font-weight="bold" font-size="9" fill="#5b5e66">RIGHT</text><text transform="matrix(.7 .26 -.8 .3 29 11)" font-family="Liberation Sans" font-weight="bold" font-size="8" fill="#5b5e66">TOP</text></svg>
      <svg class="axis" viewBox="0 0 28 30" aria-hidden="true"><path d="M14.500 9v15" stroke="#0e0"/><path d="m14 24-7 4" stroke="#00e" stroke-width="1.300"/><path d="m14 24 7 4" stroke="#e00" stroke-width="1.300"/><g font-family="DejaVu Sans" font-weight="bold" font-size="9"><text x="11" y="7" fill="#0e0">y</text><text x="1" y="27" fill="#00e">z</text><text x="21" y="27" fill="#e00">x</text></g></svg>
      <span class="camname">persp</span>
    </div>
  </section>

  <section class="channel">
    <div class="chicons"><button aria-label="Manipulators"><svg><use href="#triad"/></svg></button><button aria-label="Speed"><svg><use href="#speed"/></svg></button><button aria-label="Hyperbolic"><svg><use href="#graph"/></svg></button></div>
    <div class="menus"><button>Channels</button><button>Edit</button><button>Object</button><button>Show</button></div>
    <p class="hint">Select objects in the scene to view, edit and set keyframes on channels (attributes)</p>
    <span class="splitdots"></span>
    <div class="layerbox">
      <div class="ltabs" role="tablist"><button role="tab" aria-selected="true">Display</button><button role="tab">Anim</button></div>
      <div class="menus"><button>Layers</button><button>Options</button><button>Help</button></div>
      <div class="licons"><button aria-label="Move up"><svg><use href="#layup"/></svg></button><button aria-label="Move down"><svg><use href="#laydown"/></svg></button><button class="gap" aria-label="New layer"><svg><use href="#layplus"/></svg></button><button aria-label="New layer from selection"><svg><use href="#laydot"/></svg></button></div>
      <div class="llist"></div>
      <div class="hscroll"><i class="left"></i><b></b><i class="right"></i></div>
    </div>
  </section>
  <div class="sidetabs" role="tablist"><button role="tab" aria-selected="true">Channel Box / Layer Editor</button><button role="tab">Attribute Editor</button><button role="tab">Modeling Toolkit</button></div>
</main>

<section class="timeline">
  <span class="grip"></span>
  <div class="track">
    <ol><li>0</li><li>10</li><li>20</li><li>30</li><li>40</li><li>50</li><li>60</li><li>70</li><li>80</li><li>90</li><li>100</li><li>110</li><li>120</li><li>130</li><li>140</li><li>150</li><li>160</li><li>170</li><li>180</li><li>190</li><li>200</li><li>210</li><li>220</li><li>230</li><li>240</li><li>250</li><li>260</li><li>2</li></ol>
    <span class="playhead">0</span>
  </div>
  <input class="cur" aria-label="Current frame" value="0">
  <div class="transport"><button class="ib" aria-label="Go to start"><svg><use href="#tostart"/></svg></button><button class="ib" aria-label="Step back"><svg><use href="#stepback"/></svg></button><button class="ib" aria-label="Previous key"><svg><use href="#keyback"/></svg></button><button class="ib" aria-label="Play backwards"><svg><use href="#playback"/></svg></button><button class="ib flip" aria-label="Play forwards"><svg><use href="#playback"/></svg></button><button class="ib flip" aria-label="Next key"><svg><use href="#keyback"/></svg></button><button class="ib flip" aria-label="Step forward"><svg><use href="#stepback"/></svg></button><button class="ib flip" aria-label="Go to end"><svg><use href="#tostart"/></svg></button></div>
</section>

<section class="range">
  <span class="grip"></span>
  <input aria-label="Animation start" value="1"><input aria-label="Playback start" value="1">
  <div class="slider"><div class="bar"><i></i><span>1</span><span class="end">270</span><i></i></div></div>
  <input aria-label="Playback end" value="270"><input aria-label="Animation end" value="300">
  <i class="sep thin"></i><button class="ib book" aria-label="Add bookmark"><svg><use href="#bookadd"/></svg></button><i class="sep thin"></i>
  <button class="drop hollow" aria-label="Character set options"></button><button class="field-btn">No Character Set</button>
  <button class="drop hollow" aria-label="Anim layer options"></button><button class="field-btn">No Anim Layer</button>
  <i class="sep"></i>
  <span class="combo fps"><select aria-label="Frame rate"><option>24 fps</option></select></span>
  <button class="ib l1" aria-label="Loop"><svg><use href="#loop"/></svg></button><button class="ib" aria-label="Cached playback"><svg><use href="#cache"/></svg></button><i class="sep"></i><button class="ib" aria-label="Sound"><svg><use href="#speaker"/></svg></button><button class="ib l2 rec" aria-label="Auto key"><svg><use href="#autokey"/></svg></button><button class="ib l2" aria-label="Animation preferences"><svg><use href="#runner"/></svg></button>
</section>

<footer class="helpline">
  <div class="help"><span class="grip"></span><span class="q">?</span><span>Select Tool: select an object</span></div>
  <div class="cmd"><span class="grip"></span><label for="mel">MEL</label><input id="mel"><i class="dots"></i><output>Viewport 2.0 floating point render target is turned on for color management.</output><button class="ib" aria-label="Script editor"><svg><use href="#script"/></svg></button></div>
</footer>
<script src="grid.js"></script>
</body>
</html>
```
FILE: styles.css
```css
* { box-sizing: border-box; }
:root {
  --bg: #444;
  --dark: #373737;
  --deep: #2b2b2b;
  --text: #c8c8c8;
  --dim: #8c8c8c;
  --btn: #5d5d5d;
  --blue: #5285a6;
  --narrow: "Noto Sans", sans-serif;
}
body {
  margin: 0;
  height: 100vh;
  display: flex;
  flex-direction: column;
  overflow: hidden;
  background: var(--bg);
  color: var(--text);
  font: 11px/14px "DejaVu Sans", sans-serif;
}
button, input, select {
  font: inherit;
  color: inherit;
  background: none;
  border: 0;
  margin: 0;
  padding: 0;
  border-radius: 0;
  appearance: none;
  outline: 0;
}
button { white-space: nowrap; }
i, b { font-style: normal; display: block; flex: none; }
ul, ol, h1, p { margin: 0; padding: 0; list-style: none; }
.defs { position: absolute; width: 0; height: 0; }

.titlebar {
  flex: none;
  height: 24px;
  display: flex;
  align-items: center;
  justify-content: center;
  gap: 8px;
  background: #f9eef1;
  border-bottom: 1px solid #222;
  padding: 0 6px 6px 0;
}
.lights { position: absolute; left: 5px; top: 3px; display: flex; gap: 8px; }
.light { width: 12px; height: 12px; border-radius: 50%; }
.red { background: #ff453f; }
.yellow { background: #ffb904; }
.green { background: #08cc2a; }
.docicon { width: 12px; height: 15px; }
.titlebar h1 { font: bold 13px/16px Inter, sans-serif; color: #49454a; white-space: nowrap; }

.menubar { flex: none; height: 26px; display: flex; align-items: center; padding-right: 7px; }
.home { width: 26px; height: 20px; padding-left: 4px; }
.home svg { width: 18px; height: 18px; display: block; }
.menus { display: flex; gap: 16px; font-family: var(--narrow); }
.menubar .menus { flex: 0 1 843px; padding-left: 8px; justify-content: space-between; gap: 4px; }
.wslabel { margin: 0 5px 0 auto; font-family: var(--narrow); }
.combo { position: relative; display: block; flex: none; background: var(--btn); border-radius: 2px; }
.combo select { display: block; width: 100%; height: 100%; padding: 0 3px; }
.combo::after {
  content: "";
  position: absolute;
  right: 5px;
  top: 7px;
  border: 5px solid transparent;
  border-top-color: #c8c8c8;
  border-bottom: 0;
}
.combo::before { content: ""; position: absolute; right: 18px; top: 0; bottom: 0; border-left: 1px solid #4b4b4b; }
.ws { width: 198px; height: 18px; margin-bottom: 2px; font-family: var(--narrow); }
.lock { width: 14px; height: 18px; margin-left: 8px; }
.lock svg { display: block; width: 14px; height: 18px; }

.grip {
  flex: none;
  width: 6px;
  align-self: stretch;
  background-image: radial-gradient(circle, #858585 25%, transparent 40%);
  background-size: 3px 3px;
}
.status { flex: none; height: 29px; display: flex; align-items: flex-start; padding-top: 2px; border-bottom: 2px solid var(--dark); }
.status .grip { align-self: auto; height: 22px; }
.mode { width: 98px; height: 20px; margin: 1px 2px 0 5px; }
.mode select { padding-top: 2px; }
.ib { flex: none; width: 23px; height: 22px; display: grid; place-items: center; }
.ib svg { width: 18px; height: 18px; }
.on { background: var(--blue); }
.sep {
  width: 23px;
  height: 20px;
  margin-top: 1px;
  background: linear-gradient(#8a8a8a, #8a8a8a) center / 1px 100% no-repeat, linear-gradient(#8a8a8a, #8a8a8a) center / 3px 12px no-repeat;
}
.mode + .sep { width: 20px; }
.more {
  width: 5px;
  height: 20px;
  margin: 1px 8px 0 9px;
  background: #8a8a8a;
  clip-path: polygon(0 0, 1px 0, 1px 30%, 100% 50%, 1px 70%, 1px 100%, 0 100%);
}
.drop { flex: none; width: 18px; height: 22px; display: grid; place-items: center; }
.drop::before { content: ""; border: 4px solid transparent; border-top: 5px solid #929292; border-bottom: 0; }
.field-btn {
  flex: none;
  width: 100px;
  height: 22px;
  border: 1px solid #505050;
  border-radius: 3px;
  text-align: left;
  padding: 2px 0 0 5px;
  font-family: var(--narrow);
}
.account {
  flex: 0 0 160px;
  height: 22px;
  display: flex;
  align-items: center;
  gap: 5px;
  padding: 0 4px;
  background: #595959;
  color: #eee;
  font-family: var(--narrow);
}
.uicon { width: 14px; height: 16px; }
.clock { width: 16px; height: 16px; }
.tri { border: 5px solid transparent; border-top: 6px solid #ddd; border-bottom: 0; }
.panels { display: flex; margin-left: auto; padding-right: 3px; }
.panels svg { width: 20px; height: 20px; }

.shelf { flex: none; height: 69px; display: flex; border-bottom: 2px solid var(--dark); padding: 2px 3px 3px 0; }
.shelfside { flex: 0 0 20px; margin: 0 4px 0 5px; background: var(--dark); display: flex; flex-direction: column; align-items: center; justify-content: space-between; padding: 13px 0 8px; }
.burger { width: 10px; height: 7px; border-top: 1px solid #bdbdbd; border-bottom: 1px solid #bdbdbd; background: linear-gradient(#bdbdbd, #bdbdbd) center / 100% 1px no-repeat; }
.cog, .cog svg { display: block; width: 12px; height: 12px; }
.shelfmain { flex: 1; min-width: 0; }
.shelftabs { display: flex; gap: 3px; height: 19px; background: var(--dark); padding: 2px 0 0 1px; }
[role="tab"] { color: var(--dim); border: 1px solid #2c2c2c; border-bottom: 0; border-radius: 3px 3px 0 0; padding: 0 9px; }
.shelftabs button { padding-top: 1px; }
[role="tab"][aria-selected="true"] { color: #eee; background: var(--bg); border-color: var(--bg); }
.shelfitem { margin: 8px 0 0 12px; width: 19px; height: 18px; }
.shelfitem svg { display: block; width: 19px; height: 18px; }

.work { flex: 1; min-height: 0; display: flex; background: var(--bg); border-bottom: 2px solid var(--dark); }
.toolbox { flex: 0 0 43px; border-right: 2px solid var(--dark); display: flex; flex-direction: column; padding: 4px 0 7px 1px; }
.hgrip { flex: none; height: 6px; margin: 0 5px 2px 1px; background: radial-gradient(circle, #777 25%, transparent 40%) 0 0 / 3px 3px; }
.tool { width: 36px; height: 37px; display: grid; place-items: center; }
.tool svg { width: 32px; height: 34px; }
.tool .cursor { width: 20px; height: 29px; }
.layouts { margin: auto 4px 0 0; border-top: 2px solid #949494; padding: 8px 0 0 3px; }
.layouts button, .layouts svg { display: block; }
.four { width: 30px; height: 30px; }
.pane { width: 30px; height: 19px; margin-top: 7px; }
.logo { width: 30px; height: 32px; margin-top: 2px; }

.outliner { flex: 0 0 265px; border-right: 2px solid var(--dark); display: flex; flex-direction: column; position: relative; }
.otabs { flex: none; height: 18px; background: var(--dark); padding: 2px 0 0 2px; display: flex; }
.otabs button { height: 16px; font-family: var(--narrow); }
.outliner .menus { flex: none; padding: 3px 11px 5px; height: 26px; }
.searchrow { flex: none; display: flex; align-items: center; gap: 7px; padding: 1px 5px 0 8px; height: 22px; }
.searchrow svg { width: 16px; height: 16px; }
.searchbox { flex: 1; height: 18px; display: flex; align-items: center; background: var(--deep); border-radius: 2px; padding: 0 4px 0 3px; }
.searchbox input { flex: 1; min-width: 0; }
input::placeholder { color: #888; opacity: 1; }
.tree { flex: 1; margin: 0 4px 10px 4px; background: var(--dark); display: grid; grid-template: 1fr 10px / 1fr 10px; }
.tree ul { padding-top: 1px; }
.tree li { height: 20px; display: flex; align-items: center; gap: 3px; padding-left: 34px; }
.tree li svg { width: 17px; height: 17px; }
.dim { color: #6c6c6c; }
.vscroll { display: flex; flex-direction: column; gap: 4px; padding: 3px 0 6px; align-items: center; }
.vscroll b { flex: 1; width: 10px; border-radius: 4px; background: #5f5f5f; }
.up, .down { width: 0; height: 0; border: 5px solid transparent; }
.up { border-bottom-color: #bdbdbd; border-top: 0; }
.down { border-top-color: #bdbdbd; border-bottom: 0; }
.hscroll { display: flex; gap: 5px; align-items: center; padding: 0 5px 0 3px; }
.hscroll b { flex: 1; height: 10px; border-radius: 4px; background: #5f5f5f; }
.left, .right { width: 0; height: 0; border: 5px solid transparent; }
.left { border-right-color: #bdbdbd; border-left: 0; }
.right { border-left-color: #bdbdbd; border-right: 0; }
.splitdots { width: 86px; height: 3px; background: radial-gradient(circle, #888 25%, transparent 40%) 0 0 / 3px 3px; }
.outliner .splitdots { position: absolute; bottom: 6px; left: 88px; }

.viewpanel { flex: 1; min-width: 0; margin: 4px 4px 3px 4px; border: 1px solid #858585; display: flex; flex-direction: column; }
.viewpanel > .menus { flex: none; height: 19px; padding: 1px 8px 3px; }
.viewbar { flex: none; height: 19px; display: flex; overflow: hidden; }
.viewbar .sep { width: 11px; height: 16px; }
.vb { flex: none; width: 19px; height: 18px; }
.vb svg { display: block; width: 18px; height: 18px; margin: 0 auto; }
.vb.wide { width: 22px; }
.num { flex: none; width: 38px; height: 14px; margin-top: 2px; background: var(--deep); border-radius: 2px; text-align: center; color: #ddd; }
.cm { flex: none; width: 18px; height: 18px; margin-left: 3px; background: var(--blue); }
.cm svg { display: block; width: 18px; height: 18px; }
.scene { flex: 1; position: relative; overflow: hidden; background: #5d5d5d; }
.grid { position: absolute; width: 100%; height: 100%; stroke: #404040; shape-rendering: crispEdges; }
.cube { position: absolute; right: 23px; top: 24px; width: 70px; height: 74px; }
.axis { position: absolute; left: 11px; bottom: 19px; width: 28px; height: 30px; overflow: visible; }
.camname { position: absolute; left: 0; right: 12px; bottom: 6px; text-align: center; color: #fff; font: bold 10px/14px var(--narrow); }

.channel { flex: 0 0 264px; border-left: 2px solid var(--dark); display: flex; flex-direction: column; padding: 4px 3px 5px 4px; }
.chicons { display: flex; justify-content: flex-end; gap: 5px; padding-right: 2px; height: 23px; }
.chicons button, .chicons svg { width: 16px; height: 16px; display: block; }
.channel > .menus { padding-left: 7px; }
.hint { flex: 1; width: 182px; margin: 0 auto; display: grid; align-content: center; text-align: center; font: bold 11px/13px var(--narrow); }
.channel > .splitdots { align-self: center; margin-bottom: 8px; }
.layerbox { flex: none; height: 195px; border: 1px solid #303030; border-top: 0; display: flex; flex-direction: column; }
.ltabs { display: flex; gap: 2px; height: 18px; background: var(--dark); padding: 2px 0 0; }
.ltabs button { height: 16px; font-family: var(--narrow); padding: 0 10px; }
.layerbox .menus { padding: 4px 9px 5px; }
.licons { display: flex; justify-content: flex-end; gap: 7px; padding-right: 8px; height: 23px; }
.licons button, .licons svg { display: block; width: 16px; height: 16px; }
.licons .gap { margin-left: 4px; }
.llist { flex: 1; margin: 0 4px 0 2px; background: var(--deep); }
.layerbox .hscroll { height: 12px; margin: 0 4px 3px 2px; background: var(--dark); }
.layerbox .hscroll b { flex: 0 1 154px; }
.layerbox .right { margin-left: auto; }
.sidetabs { flex: 0 0 16px; background: var(--dark); display: flex; flex-direction: column; gap: 2px; padding: 1px 1px 0 0; }
.sidetabs button { writing-mode: vertical-rl; width: 15px; font: 11px/14px var(--narrow); border: 0; border-bottom: 1px solid #2c2c2c; border-radius: 0; padding: 13px 0; }

.timeline { flex: none; height: 41px; display: flex; align-items: center; border-bottom: 2px solid var(--dark); padding: 0 9px 1px 0; }
.track { flex: 1; min-width: 0; height: 32px; margin-left: 5px; background: var(--deep); position: relative; }
.track ol { display: flex; height: 100%; }
.track li { flex: 0 0 3.67%; padding-left: 2px; color: #777; line-height: 12px; font-family: var(--narrow); background: linear-gradient(#808080, #808080) left bottom / 2px 19px no-repeat; }
.track li:last-child { flex: 1 1 0; min-width: 0; }
.playhead { position: absolute; left: 0; top: 0; height: 32px; border-left: 2px solid #666; color: #fff; padding-top: 18px; line-height: 14px; font-family: var(--narrow); }
.cur, .range input { flex: none; width: 88px; background: var(--deep); border-radius: 2px; padding-left: 5px; }
.cur { height: 18px; margin: 0 6px 0 7px; font-family: var(--narrow); }
.transport { display: flex; margin-bottom: 3px; }
.transport svg { width: 19px; height: 19px; }
.flip svg { transform: scaleX(-1); }

.range { flex: none; height: 36px; display: flex; align-items: center; border-bottom: 2px solid var(--dark); padding-right: 9px; font-family: var(--narrow); }
.range input { height: 24px; margin-left: 8px; }
.range .grip + input { margin-left: 5px; }
.range .sep { width: 22px; margin-top: 0; }
.slider { flex: 1; min-width: 0; height: 24px; margin-left: 7px; background: var(--dark); padding: 2px; }
.bar { width: 91%; height: 19px; background: var(--btn); border: 1px solid #686868; border-radius: 3px; display: flex; align-items: center; gap: 4px; padding: 0 3px; }
.bar i { width: 12px; height: 13px; border-radius: 3px; background: #979797; }
.bar .end { margin-left: auto; }
.range .thin { width: 11px; }
.book { width: 34px; }
.hollow { width: 26px; }
.hollow::before { border-top-color: #777; }
.range .field-btn { width: 102px; height: 24px; }
.fps { width: 101px; height: 20px; margin: 0 0 4px 1px; }
.l1 { margin: 0 6px 0 11px; }
.l2 { margin-left: 6px; }
.rec { background: #d5333a; }

.helpline { flex: none; height: 28px; display: flex; font-family: var(--narrow); color: #ddd; }
.help { flex: 1; display: flex; align-items: center; gap: 5px; padding-top: 3px; border-right: 2px solid var(--dark); }
.q { width: 16px; height: 16px; border-radius: 50%; background: #80b52d; color: #222; font-weight: bold; font-size: 14px; line-height: 16px; text-align: center; margin-right: 2px; }
.cmd { flex: 0 0 698px; display: flex; align-items: center; padding: 3px 7px 0 3px; }
.cmd label { margin: 0 14px 0 15px; }
.cmd input { width: 131px; height: 22px; background: var(--deep); border-radius: 2px; }
.dots { width: 3px; height: 12px; margin: 0 3px 0 2px; background: radial-gradient(circle, #888 25%, transparent 40%) 0 0 / 3px 3px; }
.cmd output { flex: 1; height: 20px; line-height: 20px; background: var(--deep); padding-left: 6px; margin-right: 4px; white-space: nowrap; }
```
FILE: grid.js
```js
// Ground plane: 24 x 24 cells seen from the default perspective camera.
const svg = document.querySelector(".grid");
const half = 12;

function project(u, v) {
  const w = 1 - 0.171 * (u + v);
  return [382 + (141 * (u - v)) / w, 186 + (65.8 * (u + v)) / w];
}

function addLine(from, to, width) {
  const line = document.createElementNS("http://www.w3.org/2000/svg", "line");
  line.setAttribute("x1", from[0]);
  line.setAttribute("y1", from[1]);
  line.setAttribute("x2", to[0]);
  line.setAttribute("y2", to[1]);
  line.setAttribute("stroke-width", width);
  svg.appendChild(line);
}

for (let i = -half; i <= half; i++) {
  const t = i / half;
  const width = i === 0 ? 2 : 1;
  addLine(project(t, -1), project(t, 1), width);
  addLine(project(-1, t), project(1, t), width);
}
```
